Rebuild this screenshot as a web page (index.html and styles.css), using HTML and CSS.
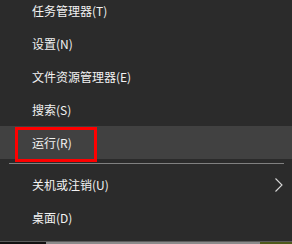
FILE: index.html
```html
<!DOCTYPE html>
<html lang="zh-CN">
<head>
    <meta charset="UTF-8">
    <title>快捷菜单</title>
    <link rel="stylesheet" href="styles.css">
</head>
<body>
    <div class="menu">
        <div class="item">任务管理器(T)</div>
        <div class="item">设置(N)</div>
        <div class="item">文件资源管理器(E)</div>
        <div class="item">搜索(S)</div>
        <div class="item hover">
            运行(R)
            <span class="mark"></span>
        </div>
        <div class="sep"></div>
        <div class="item sub">
            <span>关机或注销(U)</span>
            <svg class="arrow" width="8" height="14" viewBox="0 0 8 14">
                <path d="M0.5 0.5 L7 7 L0.5 13.5" fill="none" stroke="#d8d8d8" stroke-width="1.1"/>
            </svg>
        </div>
        <div class="item">桌面(D)</div>
    </div>

    <div class="taskbar">
        <div class="edge"></div>
        <div class="strip">
            <div class="dark"></div>
            <div class="gray"></div>
            <div class="green"></div>
        </div>
    </div>
</body>
</html>
```

FILE: styles.css
```css
html, body {
    margin: 0;
    padding: 0;
    height: 244px;
    overflow: hidden;
}
body {
    background-color: #2b2b2b;
    font-family: "Noto Sans CJK SC", "Microsoft YaHei", sans-serif;
    font-size: 12px;
    color: #f2f2f2;
    display: flex;
    flex-direction: column;
}
.menu {
    margin-top: -6px;
}
.item {
    height: 33px;
    line-height: 33px;
    padding-left: 32px;
    padding-right: 9px;
}
.hover {
    background-color: #414141;
    position: relative;
}
.mark {
    position: absolute;
    left: 15px;
    top: 1px;
    width: 82px;
    height: 35px;
    border: 3px solid #ff0000;
    box-sizing: border-box;
}
.sep {
    height: 1px;
    margin: 4px 8px 4px 9px;
    background-color: #808080;
}
.sub {
    display: flex;
    justify-content: space-between;
    align-items: center;
}
.arrow {
    display: block;
    margin-top: 1px;
}
.taskbar {
    margin-top: auto;
}
.edge {
    height: 1px;
    background-color: #5c5c5c;
}
.strip {
    display: flex;
    height: 2px;
}
.dark {
    width: 46px;
    background-color: #111;
}
.gray {
    flex: 1;
    background-color: #8a8a8a;
}
.green {
    width: 32px;
    background-color: #4f5a1c;
}
```
